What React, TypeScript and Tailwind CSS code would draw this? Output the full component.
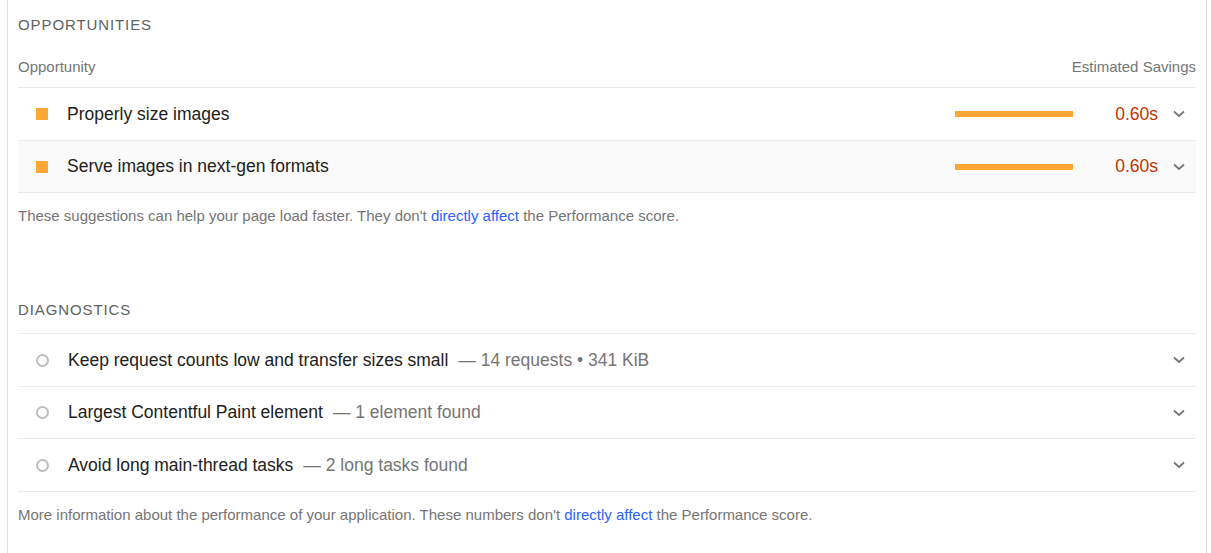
import React from "react";

const Chevron = () => (
  <svg width="12" height="8" viewBox="0 0 12 8" className="block">
    <path d="M1 1.5 L6 6 L11 1.5" fill="none" stroke="#757575" strokeWidth="1.8" />
  </svg>
);

function OppRow({ title, shade }: { title: string; shade?: boolean }) {
  return (
    <div className={`flex ${shade ? "h-[52px] bg-[#fafafa]" : "h-[53px]"} items-center border-b border-[#ebebeb]`}>
      <div className="ml-[18px] h-[12px] w-[12px] bg-[#ffa733]" />
      <div className="ml-[19px] flex-1 text-[17.5px] text-[#212121]">{title}</div>
      <div className="h-[6px] w-[118px] bg-[#ffa733]" />
      <div className="ml-[42px] text-[17.5px] text-[#c33300]">0.60s</div>
      <div className="ml-[15px] mr-[11px] w-[12px]">
        <Chevron />
      </div>
    </div>
  );
}

function DiagRow({ title, detail, tall }: { title: string; detail: string; tall?: boolean }) {
  return (
    <div className={`flex ${tall ? "h-[53px]" : "h-[52px]"} items-center border-b border-[#ebebeb]`}>
      <div className="ml-[18px] h-[13px] w-[13px] rounded-full border-[2.5px] border-[#bdbdbd]" />
      <div className="ml-[19px] flex-1 text-[17.5px] text-[#212121]">
        {title}
        <span className="ml-[10px] text-[#757575]">{detail}</span>
      </div>
      <div className="ml-[15px] mr-[11px] w-[12px]">
        <Chevron />
      </div>
    </div>
  );
}

export default function App() {
  return (
    <div className="h-[553px] w-[1211px] bg-white pl-[7px] pr-[4px]" style={{ fontFamily: '"Liberation Sans", Arial, sans-serif' }}>
      <div className="h-full border-l border-r border-[#e0e0e0] px-[10px]">
        <div className="pt-[15px] text-[15px] leading-[20px] tracking-[0.9px] text-[#616161]">OPPORTUNITIES</div>
        <div className="mt-[22px] flex justify-between border-b border-[#ebebeb] pb-[10px] text-[15px] leading-[20px] text-[#757575]">
          <span>Opportunity</span>
          <span>Estimated Savings</span>
        </div>
        <OppRow title="Properly size images" />
        <OppRow title="Serve images in next-gen formats" shade />
        <div className="mt-[13px] text-[15px] leading-[20px] text-[#757575]">
          These suggestions can help your page load faster. They don't{" "}
          <span className="text-[#2962ff]">directly affect</span> the Performance score.
        </div>
        <div className="mt-[74px] border-b border-[#ebebeb] pb-[13px] text-[15px] leading-[20px] tracking-[0.9px] text-[#616161]">DIAGNOSTICS</div>
        <DiagRow title="Keep request counts low and transfer sizes small" detail="— 14 requests • 341 KiB" tall />
        <DiagRow title="Largest Contentful Paint element" detail="— 1 element found" />
        <DiagRow title="Avoid long main-thread tasks" detail="— 2 long tasks found" tall />
        <div className="mt-[13px] text-[15px] leading-[20px] text-[#757575]">
          More information about the performance of your application. These numbers don't{" "}
          <span className="text-[#2962ff]">directly affect</span> the Performance score.
        </div>
      </div>
    </div>
  );
}
